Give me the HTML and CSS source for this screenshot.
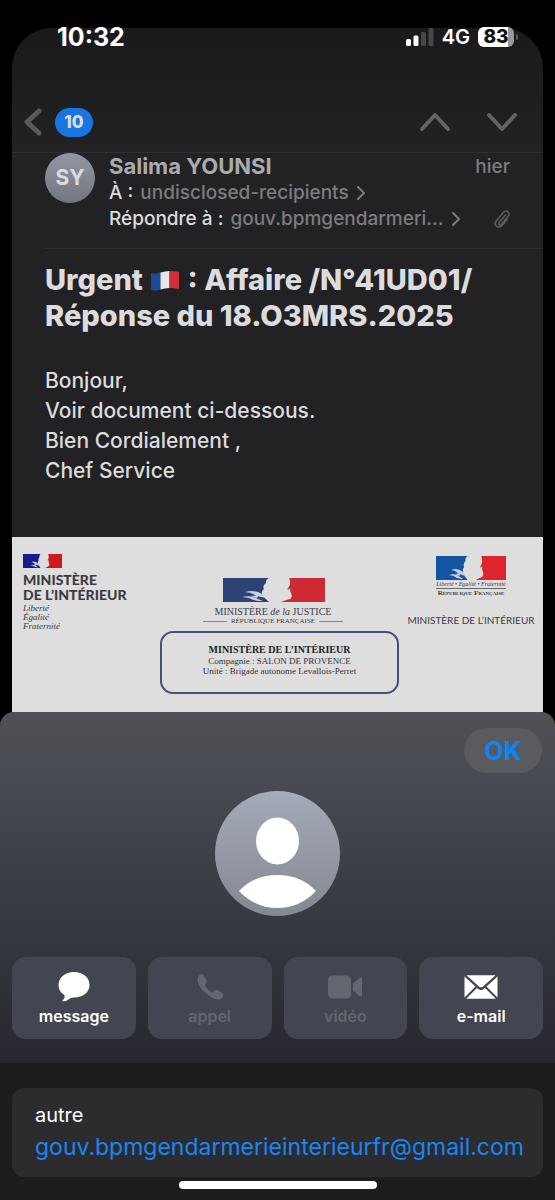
FILE: index.html
```html
<!DOCTYPE html>
<html lang="fr">
<head>
<meta charset="utf-8">
<meta name="viewport" content="width=device-width, initial-scale=1">
<title>Mail</title>
<link rel="stylesheet" href="styles.css">
</head>
<body>
<svg class="defs" aria-hidden="true">
  <symbol id="marianne" viewBox="0 0 102 24" preserveAspectRatio="none">
    <path class="m-blue" d="M0 0H46Q42 2 43 5Q39 8 41 11Q38 13 39 16Q41 20 46 24H0Z"/>
    <path class="m-red" d="M66 0H102V24H58Q63 22 67 21Q70 19 68 15L67 13L67.500 11L65 10L67 7Q68 3 66 0Z"/>
    <path class="m-face" d="M22 14Q31 11 39 16L43 20Q36 19 32 17Q27 14 22 14ZM19 19Q29 17 35 21L40 23Q30 23 26 20ZM28 18L36 17L34 20Z"/>
    <path class="m-eye" d="M64.500 10h3v1.500h-3z"/>
  </symbol>
</svg>
<div class="screen">
  <div class="status">
    <time class="clock">10:32</time>
    <div class="status-right">
      <svg class="signal" viewBox="0 0 28 18" aria-label="Signal">
        <rect x="0" y="11" width="5" height="7" rx="1.500" fill="#fff"/>
        <rect x="7.500" y="7.500" width="5" height="10.500" rx="1.500" fill="#fff"/>
        <rect x="15" y="4" width="5" height="14" rx="1.500" fill="#47474a"/>
        <rect x="22.500" y="0" width="5" height="18" rx="1.500" fill="#47474a"/>
      </svg>
      <span class="network">4G</span>
      <span class="battery">83</span>
    </div>
  </div>

  <main class="mail">
    <nav class="nav">
      <button class="back" aria-label="Retour">
        <svg width="18" height="28" viewBox="0 0 18 28"><path d="M15 3L3 14L15 25"/></svg>
        <span class="count">10</span>
      </button>
      <div class="nav-arrows">
        <button aria-label="Message précédent"><svg width="32" height="20" viewBox="0 0 32 20"><path d="M3 17L16 3L29 17"/></svg></button>
        <button aria-label="Message suivant"><svg width="32" height="20" viewBox="0 0 32 20"><path d="M3 3L16 17L29 3"/></svg></button>
      </div>
    </nav>

    <header class="sender">
      <div class="initials">SY</div>
      <div class="fields">
        <div class="name-row"><strong>Salima YOUNSI</strong><span>hier</span></div>
        <div class="field"><span class="label">À :</span><span class="value">undisclosed-recipients</span>
          <svg class="chev" viewBox="0 0 10 14"><path d="M2 1L8 7L2 13"/></svg></div>
        <div class="field"><span class="label">Répondre à :</span><span class="value">gouv.bpmgendarmeri...</span>
          <svg class="chev" viewBox="0 0 10 14"><path d="M2 1L8 7L2 13"/></svg>
          <svg class="clip" viewBox="0 0 16 18"><path d="M11.500 5L5 12.500Q4 14 5.200 14.800Q6.400 15.500 7.500 14.200L14 6.500Q16 3.500 13.800 1.700Q11.500 0 9.300 2.500L2.300 10.700Q0 14 2.500 16.200Q5.300 18.200 8 15.500L13 9.500"/></svg>
        </div>
      </div>
    </header>

    <article class="content">
      <h1>Urgent <svg class="flag" viewBox="0 0 28 20" role="img" aria-label="Drapeau français"><path fill="#1c4a9a" d="M0 2Q5 3 9.500 1.500V18.500Q5 20 0 19Z"/><path fill="#e6e6ea" d="M9.500 1.500Q14 0 18.500 0V17Q14 17 9.500 18.500Z"/><path fill="#cf3036" d="M18.500 0Q24 0 28 1V18Q24 17 18.500 17Z"/></svg> : Affaire /N°41UD01/<br>Réponse du 18.O3MRS.2025</h1>
      <p>Bonjour,<br>Voir document ci-dessous.<br>Bien Cordialement ,<br>Chef Service</p>
    </article>

    <section class="document">
      <div class="logo-left">
        <svg class="marianne"><use href="#marianne"/></svg>
        <b>MINISTÈRE<br>DE L’INTÉRIEUR</b>
        <i>Liberté<br>Égalité<br>Fraternité</i>
      </div>
      <div class="doc-center">
        <svg class="marianne"><use href="#marianne"/></svg>
        <div class="justice">MINISTÈRE <i>de la</i> JUSTICE</div>
        <div class="republic">RÉPUBLIQUE FRANÇAISE</div>
        <div class="unit">
          <strong>MINISTÈRE DE L’INTÉRIEUR</strong>
          <span>Compagnie : SALON DE PROVENCE</span>
          <span>Unité : Brigade autonome Levallois-Perret</span>
        </div>
      </div>
      <div class="logo-right">
        <svg class="marianne"><use href="#marianne"/></svg>
        <i>Liberté • Égalité • Fraternité</i>
        <small>République Française</small>
        <span>MINISTÈRE DE L’INTÉRIEUR</span>
      </div>
    </section>
  </main>

  <section class="sheet">
    <div class="contact">
      <button class="ok">OK</button>
      <svg class="avatar" viewBox="0 0 125 125" role="img" aria-label="Contact">
        <defs><linearGradient id="av" x1="0" y1="0" x2="0" y2="1"><stop offset="0" stop-color="#a5abb9"/><stop offset="1" stop-color="#858791"/></linearGradient></defs>
        <circle cx="62.500" cy="62.500" r="62.500" fill="url(#av)"/>
        <ellipse cx="62.500" cy="50" rx="21.500" ry="23.500" fill="#fff"/>
        <path fill="#fff" d="M24 100Q39 84 62.500 84Q86 84 101 100Q85 117 62.500 117Q40 117 24 100Z"/>
      </svg>
      <div class="actions">
        <button>
          <svg width="34" height="30" viewBox="0 0 34 30"><path d="M17 0C26 0 32.500 5.500 32.500 13C32.500 20.500 26 25.500 17 25.500Q14.500 25.500 13 26.500Q9.500 29.500 5.500 29.300Q5 28.800 6 28Q8.200 25.500 7.600 23.300Q1.500 19.500 1.500 13C1.500 5.500 8 0 17 0Z"/></svg>
          message
        </button>
        <button disabled>
          <svg width="34" height="30" viewBox="0 0 34 30"><path d="M8 2Q5 3.500 4.500 7.500Q5 14 12 20.500Q19 27 25.500 27.500Q29 27.500 30.300 24Q31 22.500 29.500 21.300L24.500 18Q23 17.300 21.500 18.500L19.500 20.500Q16 19.500 11.500 13L13.300 11Q14.300 9.500 13.300 8L10.500 3Q9.300 1.500 8 2Z"/></svg>
          appel
        </button>
        <button disabled>
          <svg width="34" height="30" viewBox="0 0 34 30"><rect x="0" y="3.500" width="23" height="23" rx="4.500"/><path d="M25 11.500L31.500 6Q34 4.500 34 7V23Q34 25.500 31.500 24L25 18.500Z"/></svg>
          vidéo
        </button>
        <button>
          <svg width="34" height="30" viewBox="0 0 34 30"><path d="M2.500 3.300H31.500L18.800 14.700Q17 16 15.200 14.700ZM.5 4.500L11.500 14.500L.5 25.500ZM33.500 4.500V25.500L22.500 14.500ZM13 16L15 17.500Q17 18.700 19 17.500L21 16L31.800 26.700H2.200Z"/></svg>
          e-mail
        </button>
      </div>
    </div>
    <div class="details">
      <div class="address">
        <span>autre</span>
        <a href="mailto:gouv.bpmgendarmerieinterieurfr@gmail.com">gouv.bpmgendarmerieinterieurfr@gmail.com</a>
      </div>
    </div>
  </section>
  <div class="home"></div>
</div>
</body>
</html>
```
FILE: styles.css
```css
* { box-sizing: border-box; }
body { margin: 0; background: #000; color: #fff; font-family: Inter, "Liberation Sans", sans-serif; }
button { margin: 0; padding: 0; border: 0; background: none; color: inherit; font: inherit; }
svg { display: block; flex: none; }
.defs { position: absolute; width: 0; height: 0; }
.screen { position: relative; display: flex; flex-direction: column; min-height: 100vh; padding-top: 28px; }

.status { position: absolute; top: 24px; left: 0; right: 0; display: flex; justify-content: space-between; align-items: center; height: 26px; padding: 0 41px 0 57px; }
.clock { font-size: 25px; font-weight: 700; }
.status-right { display: flex; align-items: center; gap: 8px; }
.signal { width: 28px; height: 18px; }
.network { font-size: 20px; font-weight: 600; }
.battery { position: relative; width: 36px; height: 20px; border-radius: 6px; background: linear-gradient(90deg, #fff 83%, #98989a 83%); color: #111; font-size: 19px; line-height: 20px; font-weight: 800; text-align: center; }
.battery::after { content: ""; position: absolute; right: -4px; top: 7px; width: 2px; height: 6px; border-radius: 0 2px 2px 0; background: #5a5a5c; }

.mail { margin: 0 12px; border-radius: 40px 40px 0 0; background: linear-gradient(#1a1a1c, #222224 124px); overflow: hidden; }
.nav { display: flex; justify-content: space-between; height: 125px; padding: 78px 25px 0 12px; border-bottom: 1px solid #303032; }
.nav svg { fill: none; stroke: #646466; stroke-width: 5; stroke-linecap: round; stroke-linejoin: round; }
.back, .nav-arrows { display: flex; align-items: center; height: 32px; }
.back { gap: 13px; }
.back svg { stroke: #5a5a5c; }
.nav-arrows { gap: 35px; }
.nav-arrows svg { stroke-width: 4; }
.count { width: 38px; height: 29px; border-radius: 15px; background: #1976e0; color: #dcdcde; font-size: 17px; line-height: 29px; font-weight: 800; text-align: center; }

.sender { display: flex; gap: 14px; margin-left: 33px; height: 96px; border-bottom: 1px solid #303032; }
.initials { flex: none; width: 50px; height: 50px; border-radius: 50%; background: linear-gradient(#9297a4, #74767f); color: #dcdcde; font-size: 21px; line-height: 50px; font-weight: 700; text-align: center; }
.fields { flex: 1; padding: 1px 33px 0 0; color: #7c7c80; font-size: 19px; line-height: 26px; font-weight: 500; }
.name-row { display: flex; justify-content: space-between; }
.name-row strong { color: #ababad; font-size: 22px; line-height: 25px; font-weight: 700; }
.field { display: flex; align-items: center; gap: 7px; }
.label { color: #dcdcde; }
.chev { width: 10px; height: 14px; fill: none; stroke: #7c7c80; stroke-width: 2; stroke-linecap: round; stroke-linejoin: round; }
.clip { width: 16px; height: 18px; margin-left: auto; fill: none; stroke: #5e5e62; stroke-width: 1.500; stroke-linecap: round; }

.content { padding: 13px 33px 51px; color: #dcdcde; }
h1 { margin: 0; font-size: 29px; line-height: 36px; font-weight: 800; white-space: nowrap; }
.flag { display: inline-block; width: 28px; height: 20px; margin: 0 2px; vertical-align: -1px; }
.content p { margin: 32px 0 0; font-size: 21px; line-height: 30px; font-weight: 500; }

.document { display: grid; grid-template-columns: 130px 1fr 130px; gap: 7px; padding: 17px 7px 30px 11px; background: #dededf; color: #3c3c40; }
.m-blue { fill: var(--blue); }
.m-red { fill: var(--red); }
.m-face { fill: #c9d0de; }
.m-eye { fill: #777; }
.logo-left { --blue: #1a1a8c; --red: #cf1920; }
.logo-left .marianne { width: 39px; height: 14px; }
.logo-left b { display: block; margin-top: 4px; font: 900 14px/15px Lato, sans-serif; }
.logo-left i { display: block; margin-top: 2px; font: italic 9px/9px "Liberation Serif", serif; }
.doc-center { --blue: #2d4275; --red: #ce2a33; padding-top: 24px; text-align: center; font-family: "Liberation Serif", serif; }
.doc-center .marianne { width: 102px; height: 24px; margin-left: 63px; }
.justice { margin-top: 5px; margin-right: 13px; font-size: 10px; line-height: 10px; }
.republic { display: flex; align-items: center; justify-content: center; gap: 4px; margin-right: 13px; font-size: 7px; line-height: 9px; }
.republic::before, .republic::after { content: ""; width: 24px; height: 1px; background: #85858a; }
.unit { display: flex; flex-direction: column; height: 63px; margin-top: 5px; padding-top: 11px; border: 2px solid #43517a; border-radius: 13px; font-size: 9px; line-height: 10px; color: #333; }
.unit strong { font-size: 10px; line-height: 12px; color: #1d1d20; }
.logo-right { --blue: #1554a0; --red: #dc252d; padding-top: 2px; display: flex; flex-direction: column; align-items: center; white-space: nowrap; }
.logo-right .marianne { width: 70px; height: 24px; }
.logo-right i { margin-top: 1px; border-bottom: 1px solid #6a6a6e; font: italic 6px/7px "Liberation Serif", serif; }
.logo-right small { font: 700 7px/9px "Liberation Serif", serif; font-variant: small-caps; }
.logo-right span { margin-top: 15px; font: 10px/14px Lato, sans-serif; }

.sheet { flex: 1; display: flex; flex-direction: column; position: relative; margin-top: -12px; border-radius: 14px 14px 0 0; background: #1c1c1e; overflow: hidden; }
.contact { display: flex; flex-direction: column; padding: 16px 12px 24px; background: linear-gradient(#515155, #484b53 18%, #26272f); }
.ok { align-self: flex-end; width: 78px; height: 45px; margin-right: 1px; border-radius: 23px; background: #5a5b5f; color: #0a84ff; font-size: 25px; font-weight: 700; }
.avatar { align-self: center; width: 125px; height: 125px; margin-top: 18px; }
.actions { display: grid; grid-template-columns: repeat(4, 1fr); gap: 12px; margin-top: 41px; }
.actions button { display: flex; flex-direction: column; align-items: center; gap: 3px; height: 82px; padding-top: 15px; border-radius: 14px; background: #434550; font-size: 16px; line-height: 22px; font-weight: 600; }
.actions svg { fill: currentColor; }
.actions button:disabled { color: #646670; }
.details { padding: 25px 12px 23px; }
.address { display: flex; flex-direction: column; height: 89px; padding: 12px 23px; border-radius: 12px; background: #2c2c2e; font-size: 20px; line-height: 30px; }
.address a { color: #1a86f5; font-size: 23px; line-height: 34px; text-decoration: none; }
.home { position: absolute; bottom: 11px; left: 50%; width: 198px; height: 8px; margin-left: -99px; border-radius: 4px; background: #fff; }
```
